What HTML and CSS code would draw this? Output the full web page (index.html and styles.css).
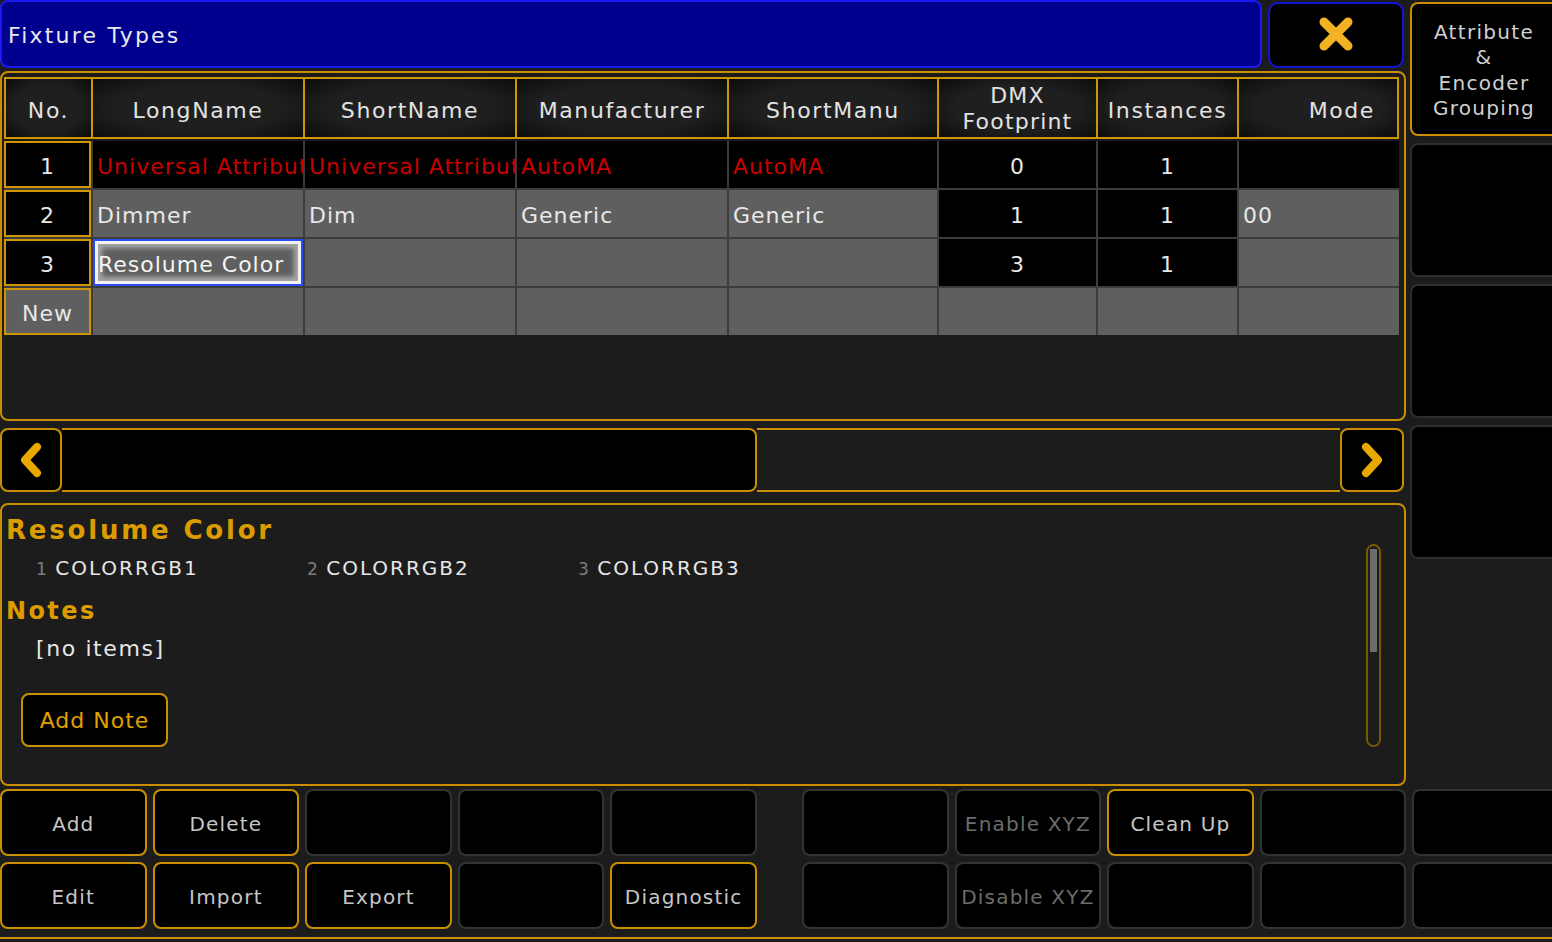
FILE: index.html
```html
<!DOCTYPE html>
<html>
<head>
<meta charset="utf-8">
<link rel="stylesheet" href="styles.css">
</head>
<body>
<div class="screen">
  <div class="top">
    <div class="main">
      <div class="titlerow">
        <div class="titlebar">Fixture Types</div>
        <div class="closebtn">
          <svg width="40" height="40" viewBox="0 0 40 40"><path d="M8 8 L32 32 M32 8 L8 32" stroke="#f2b224" stroke-width="9" stroke-linecap="round" fill="none"/></svg>
        </div>
      </div>

      <div class="tablepanel">
        <div class="grid head">
          <div class="hc first">No.</div>
          <div class="hc">LongName</div>
          <div class="hc">ShortName</div>
          <div class="hc">Manufacturer</div>
          <div class="hc">ShortManu</div>
          <div class="hc two">DMX<br>Footprint</div>
          <div class="hc">Instances</div>
          <div class="hc last mode">Mode</div>
        </div>
        <div class="grid body">
          <div class="c no blk">1</div>
          <div class="c blk red">Universal Attribute</div>
          <div class="c blk red">Universal Attribute</div>
          <div class="c blk red">AutoMA</div>
          <div class="c blk red">AutoMA</div>
          <div class="c blk ctr">0</div>
          <div class="c blk ctr">1</div>
          <div class="c blk"></div>

          <div class="c no blk">2</div>
          <div class="c">Dimmer</div>
          <div class="c">Dim</div>
          <div class="c">Generic</div>
          <div class="c">Generic</div>
          <div class="c blk ctr">1</div>
          <div class="c blk ctr">1</div>
          <div class="c">00</div>

          <div class="c no blk">3</div>
          <div class="c sel">Resolume Color</div>
          <div class="c"></div>
          <div class="c"></div>
          <div class="c"></div>
          <div class="c blk ctr">3</div>
          <div class="c blk ctr">1</div>
          <div class="c"></div>

          <div class="c no">New</div>
          <div class="c"></div>
          <div class="c"></div>
          <div class="c"></div>
          <div class="c"></div>
          <div class="c"></div>
          <div class="c"></div>
          <div class="c"></div>
        </div>
      </div>

      <div class="hscroll">
        <div class="arrow left">
          <svg width="28" height="38" viewBox="0 0 28 38"><path d="M20 6 L8 19 L20 32" stroke="#e8a800" stroke-width="8" stroke-linecap="round" stroke-linejoin="round" fill="none"/></svg>
        </div>
        <div class="thumb"></div>
        <div class="track"></div>
        <div class="arrow right">
          <svg width="28" height="38" viewBox="0 0 28 38"><path d="M8 6 L20 19 L8 32" stroke="#e8a800" stroke-width="8" stroke-linecap="round" stroke-linejoin="round" fill="none"/></svg>
        </div>
      </div>

      <div class="info">
        <div class="h1">Resolume Color</div>
        <div class="chans">
          <div class="ch"><span class="n">1</span> COLORRGB1</div>
          <div class="ch"><span class="n">2</span> COLORRGB2</div>
          <div class="ch"><span class="n">3</span> COLORRGB3</div>
        </div>
        <div class="h2">Notes</div>
        <div class="noitems">[no items]</div>
        <div class="addnote">Add Note</div>
        <div class="vscroll"><div class="vthumb"></div></div>
      </div>
    </div>

    <div class="side">
      <div class="sbtn on">Attribute<br>&amp;<br>Encoder<br>Grouping</div>
      <div class="sbtn"></div>
      <div class="sbtn"></div>
      <div class="sbtn"></div>
    </div>
  </div>

  <div class="buttons">
    <div class="bgroup">
      <div class="btn on">Add</div>
      <div class="btn on">Delete</div>
      <div class="btn"></div>
      <div class="btn"></div>
      <div class="btn"></div>
      <div class="btn on">Edit</div>
      <div class="btn on">Import</div>
      <div class="btn on">Export</div>
      <div class="btn"></div>
      <div class="btn on">Diagnostic</div>
    </div>
    <div class="bgroup right">
      <div class="btn"></div>
      <div class="btn dim">Enable XYZ</div>
      <div class="btn on">Clean Up</div>
      <div class="btn"></div>
      <div class="btn"></div>
      <div class="btn"></div>
      <div class="btn dim">Disable XYZ</div>
      <div class="btn"></div>
      <div class="btn"></div>
      <div class="btn"></div>
    </div>
  </div>
  <div class="bottomline"></div>
</div>
</body>
</html>
```

FILE: styles.css
```css
* { box-sizing: border-box; }
html, body {
  margin: 0;
  padding: 0;
  background: #1c1c1c;
}
body {
  width: 1552px;
  height: 942px;
  overflow: hidden;
  font-family: "DejaVu Sans", sans-serif;
  color: #e4e4e4;
}
.screen {
  width: 1552px;
  height: 942px;
  overflow: hidden;
}
.top {
  display: flex;
  gap: 4px;
  height: 786px;
}
.main {
  width: 1406px;
  flex: none;
  display: flex;
  flex-direction: column;
}
.titlerow {
  display: flex;
  gap: 6px;
  height: 68px;
}
.titlebar {
  width: 1262px;
  height: 68px;
  background: #00008e;
  border: 2px solid #1a1af0;
  border-radius: 8px;
  padding: 3px 0 0 6px;
  font-size: 22px;
  letter-spacing: 2.2px;
  line-height: 62px;
  color: #e8e8e8;
}
.closebtn {
  width: 136px;
  height: 66px;
  margin-top: 2px;
  background: #000;
  border: 2px solid #1414d8;
  border-radius: 10px;
  display: flex;
  align-items: center;
  justify-content: center;
}
.closebtn svg { margin-top: -2px; }

.tablepanel {
  margin-top: 3px;
  height: 350px;
  border: 2px solid #c98f00;
  border-radius: 8px;
  padding: 4px 2px 0 2px;
}
.grid {
  display: grid;
  grid-template-columns: 87px 210px 210px 210px 208px 157px 139px 160px;
  column-gap: 2px;
  width: 1395px;
}
.head {
  height: 62px;
  background: #d09600;
  padding: 2px 0;
}
.hc {
  background: radial-gradient(ellipse at center, #1f1f1f 55%, #0c0c0c 100%);
  display: flex;
  align-items: center;
  justify-content: center;
  font-size: 22px;
  letter-spacing: 1.6px;
  color: #e2e2e2;
  text-align: center;
  padding-top: 4px;
}
.hc.first { border-left: 2px solid #d09600; }
.hc.last { border-right: 2px solid #d09600; }
.hc.two { line-height: 26px; padding-top: 2px; letter-spacing: 1.2px; }
.hc.mode { justify-content: flex-end; padding-right: 22px; }

.body {
  margin-top: 2px;
  grid-auto-rows: 47px;
  row-gap: 2px;
  background: #3c3c3c;
}
.c {
  background: #5f5f5f;
  font-size: 22px;
  letter-spacing: 1px;
  line-height: 47px;
  padding: 2px 0 0 4px;
  white-space: nowrap;
  overflow: hidden;
  color: #e8e8e8;
}
.c.blk { background: #000; }
.c.red { color: #c80000; }
.c.ctr { text-align: center; padding-left: 0; }
.c.no {
  text-align: center;
  padding-left: 0;
  box-shadow: inset 0 0 0 2px #d09600;
}
.c.sel {
  border: 2px solid #2a4cf0;
  box-shadow: inset 0 0 0 3px #f2f2f2, inset 0 0 5px 7px #a8a8a8;
  line-height: 43px;
  padding: 2px 0 0 3px;
  color: #f4f4f4;
}

.hscroll {
  margin-top: 7px;
  width: 1404px;
  height: 64px;
  display: flex;
}
.arrow {
  background: #000;
  border: 2px solid #c98f00;
  border-radius: 8px;
  display: flex;
  align-items: center;
  justify-content: center;
  flex: none;
}
.arrow.left { width: 62px; }
.arrow.right { width: 64px; }
.thumb {
  width: 695px;
  background: #000;
  border: 2px solid #c98f00;
  border-left: none;
  border-radius: 0 8px 8px 0;
}
.track {
  flex: 1;
  border-top: 2px solid #c98f00;
  border-bottom: 2px solid #c98f00;
}

.info {
  position: relative;
  margin-top: 11px;
  height: 283px;
  border: 2px solid #c98f00;
  border-radius: 8px;
  padding: 1px 0 0 4px;
}
.h1, .h2 {
  font-weight: bold;
  color: #dc9c00;
  letter-spacing: 2.4px;
}
.h1 {
  font-size: 26px;
  line-height: 48px;
  letter-spacing: 2.8px;
}
.chans {
  display: flex;
  height: 28px;
  padding-left: 30px;
}
.ch {
  width: 271px;
  font-size: 20px;
  line-height: 28px;
  letter-spacing: 2px;
  color: #e6e6e6;
}
.ch .n {
  color: #7c7c7c;
  font-size: 17px;
  letter-spacing: 0;
}
.h2 {
  font-size: 24px;
  line-height: 36px;
  margin-top: 11px;
}
.noitems {
  padding-left: 30px;
  font-size: 22px;
  line-height: 40px;
  letter-spacing: 1.6px;
  color: #e6e6e6;
}
.addnote {
  margin-top: 24px;
  margin-left: 15px;
  width: 147px;
  height: 54px;
  background: #000;
  border: 2px solid #c98f00;
  border-radius: 8px;
  color: #e0a000;
  font-size: 22px;
  letter-spacing: 1px;
  line-height: 52px;
  text-align: center;
}
.vscroll {
  position: absolute;
  left: 1364px;
  top: 39px;
  width: 15px;
  height: 203px;
  border: 2px solid #7a5800;
  border-radius: 8px;
  padding: 3px 2px;
}
.vthumb {
  height: 103px;
  background: #6c6c6c;
}

.side {
  flex: 1;
  display: flex;
  flex-direction: column;
  gap: 7px;
  padding-top: 2px;
}
.sbtn {
  height: 134px;
  background: #000;
  border: 2px solid #2e2e2e;
  border-radius: 8px 0 0 8px;
  border-right: none;
}
.sbtn.on {
  border: 2px solid #c98f00;
  border-right: none;
  display: flex;
  align-items: center;
  justify-content: center;
  text-align: center;
  font-size: 20px;
  line-height: 25.5px;
  letter-spacing: 1.3px;
  color: #d0d0d0;
  padding: 3px 0 0 4px;
}

.buttons {
  display: flex;
  gap: 45px;
  margin-top: 3px;
}
.bgroup {
  width: 757px;
  flex: none;
  display: grid;
  grid-template-columns: repeat(5, 146.6px);
  grid-template-rows: 67px 67px;
  column-gap: 6px;
  row-gap: 6px;
}
.bgroup.right { width: 760px; }
.btn {
  background: #000;
  border: 2px solid #333;
  border-radius: 8px;
  display: flex;
  align-items: center;
  justify-content: center;
  font-size: 20px;
  letter-spacing: 1.2px;
  color: #c6c6c6;
  white-space: nowrap;
  overflow: hidden;
  padding-top: 2px;
}
.btn.on { border-color: #c98f00; }
.btn.dim { color: #6c6c6c; }
.bottomline {
  margin-top: 8px;
  height: 2px;
  background: #c98f00;
}
```
